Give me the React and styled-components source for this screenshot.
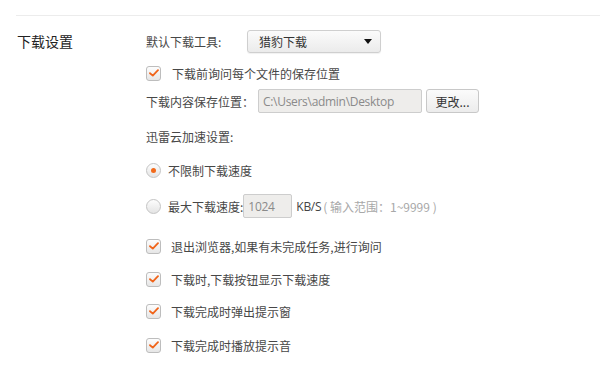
import React from "react";
import styled, { createGlobalStyle } from "styled-components";

const Global = createGlobalStyle`
  html, body {
    margin: 0;
    padding: 0;
    background: #fff;
    overflow: hidden;
  }
  body {
    font-family: "Noto Sans CJK SC", "Noto Sans", sans-serif;
    color: #474747;
  }
`;

const Page = styled.div`
  width: 600px;
  height: 370px;
  overflow: hidden;
  padding-left: 16px;
  padding-top: 15px;
  box-sizing: border-box;
`;

const Divider = styled.div`
  height: 1px;
  background: #ececec;
`;

const Section = styled.div`
  display: flex;
  padding-top: 13px;
`;

const Title = styled.div`
  width: 130px;
  flex-shrink: 0;
  font-size: 14px;
  line-height: 24px;
  color: #222;
  padding-left: 1px;
  box-sizing: border-box;
`;

const Body = styled.div`
  display: flex;
  flex-direction: column;
`;

const Row = styled.div`
  display: flex;
  align-items: center;
  height: ${(p) => p.h || 16}px;
  margin-top: ${(p) => p.mt || 0}px;
  font-size: 12px;
  white-space: nowrap;
`;

const Label = styled.span`
  width: ${(p) => (p.w ? p.w + "px" : "auto")};
  flex-shrink: 0;
`;

const Select = styled.div`
  width: 134px;
  height: 23px;
  box-sizing: border-box;
  border: 1px solid #cfcfcf;
  border-radius: 3px;
  background: linear-gradient(#fbfbfb, #ebebeb);
  display: flex;
  align-items: center;
  justify-content: space-between;
  padding: 0 8px 0 11px;
  color: #333;
  box-shadow: 0 1px 1px rgba(0, 0, 0, 0.06);
`;

const Caret = styled.span`
  width: 0;
  height: 0;
  border-left: 4px solid transparent;
  border-right: 4px solid transparent;
  border-top: 5px solid #111;
`;

const Box = styled.span`
  width: 15px;
  height: 15px;
  box-sizing: border-box;
  border: 1px solid #bdbdbd;
  border-radius: 3px;
  background: linear-gradient(#fdfdfd, #e6e6e6);
  display: inline-flex;
  align-items: center;
  justify-content: center;
  flex-shrink: 0;
  margin-right: ${(p) => p.gap || 10}px;
`;

const Radio = styled.span`
  width: 15px;
  height: 15px;
  box-sizing: border-box;
  border: 1px solid #c4c4c4;
  border-radius: 50%;
  background: linear-gradient(#fdfdfd, #e4e4e4);
  display: inline-flex;
  align-items: center;
  justify-content: center;
  flex-shrink: 0;
  margin-right: 7px;
`;

const Dot = styled.span`
  width: 5px;
  height: 5px;
  border-radius: 50%;
  background: #f26a1b;
`;

const Field = styled.div`
  width: ${(p) => p.w}px;
  height: 24px;
  box-sizing: border-box;
  border: 1px solid #cdcdcd;
  border-radius: 2px;
  background: #eeedeb;
  color: #8a8a8a;
  display: flex;
  align-items: center;
  padding-left: 4px;
  font-family: "Open Sans", "Noto Sans", sans-serif;
  font-size: 12px;
  letter-spacing: -0.3px;
`;

const Button = styled.div`
  width: 53px;
  height: 24px;
  margin-left: 4px;
  box-sizing: border-box;
  border: 1px solid #c8c8c8;
  border-radius: 3px;
  background: linear-gradient(#fbfbfb, #ececec);
  display: flex;
  align-items: center;
  justify-content: center;
  color: #333;
`;

const Unit = styled.span`
  margin-left: 4px;
  font-family: "Open Sans", "Noto Sans", sans-serif;
  letter-spacing: -0.3px;
  color: #444;
`;

const Hint = styled.span`
  color: #a8a8a8;
  margin-left: 2px;
`;

const Check = () => (
  <svg width="10" height="8" viewBox="0 0 10 8">
    <path d="M1 4.2 L3.8 6.6 L9 1.2" fill="none" stroke="#f0641a" strokeWidth="1.8" strokeLinecap="round" strokeLinejoin="round" />
  </svg>
);

const CheckRow = ({ mt, text, gap }) => (
  <Row mt={mt}>
    <Box gap={gap}>
      <Check />
    </Box>
    {text}
  </Row>
);

export default function App() {
  return (
    <Page>
      <Global />
      <Divider />
      <Section>
        <Title>下载设置</Title>
        <Body>
          <Row h={24}>
            <Label w={101}>默认下载工具:</Label>
            <Select>
              猎豹下载
              <Caret />
            </Select>
          </Row>
          <CheckRow mt={12} gap={11} text="下载前询问每个文件的保存位置" />
          <Row h={24} mt={8}>
            <Label w={112}>下载内容保存位置：</Label>
            <Field w={164}>C:\Users\admin\Desktop</Field>
            <Button>更改...</Button>
          </Row>
          <Row mt={15}>迅雷云加速设置:</Row>
          <Row mt={18}>
            <Radio>
              <Dot />
            </Radio>
            不限制下载速度
          </Row>
          <Row h={24} mt={16}>
            <Radio />
            最大下载速度:
            <Field w={49}>1024</Field>
            <Unit>KB/S</Unit>
            <Hint>( 输入范围：1~9999 )</Hint>
          </Row>
          <CheckRow mt={20} text="退出浏览器,如果有未完成任务,进行询问" />
          <CheckRow mt={17} text="下载时,下载按钮显示下载速度" />
          <CheckRow mt={16} text="下载完成时弹出提示窗" />
          <CheckRow mt={18} text="下载完成时播放提示音" />
          <CheckRow mt={17} text="" />
        </Body>
      </Section>
    </Page>
  );
}
